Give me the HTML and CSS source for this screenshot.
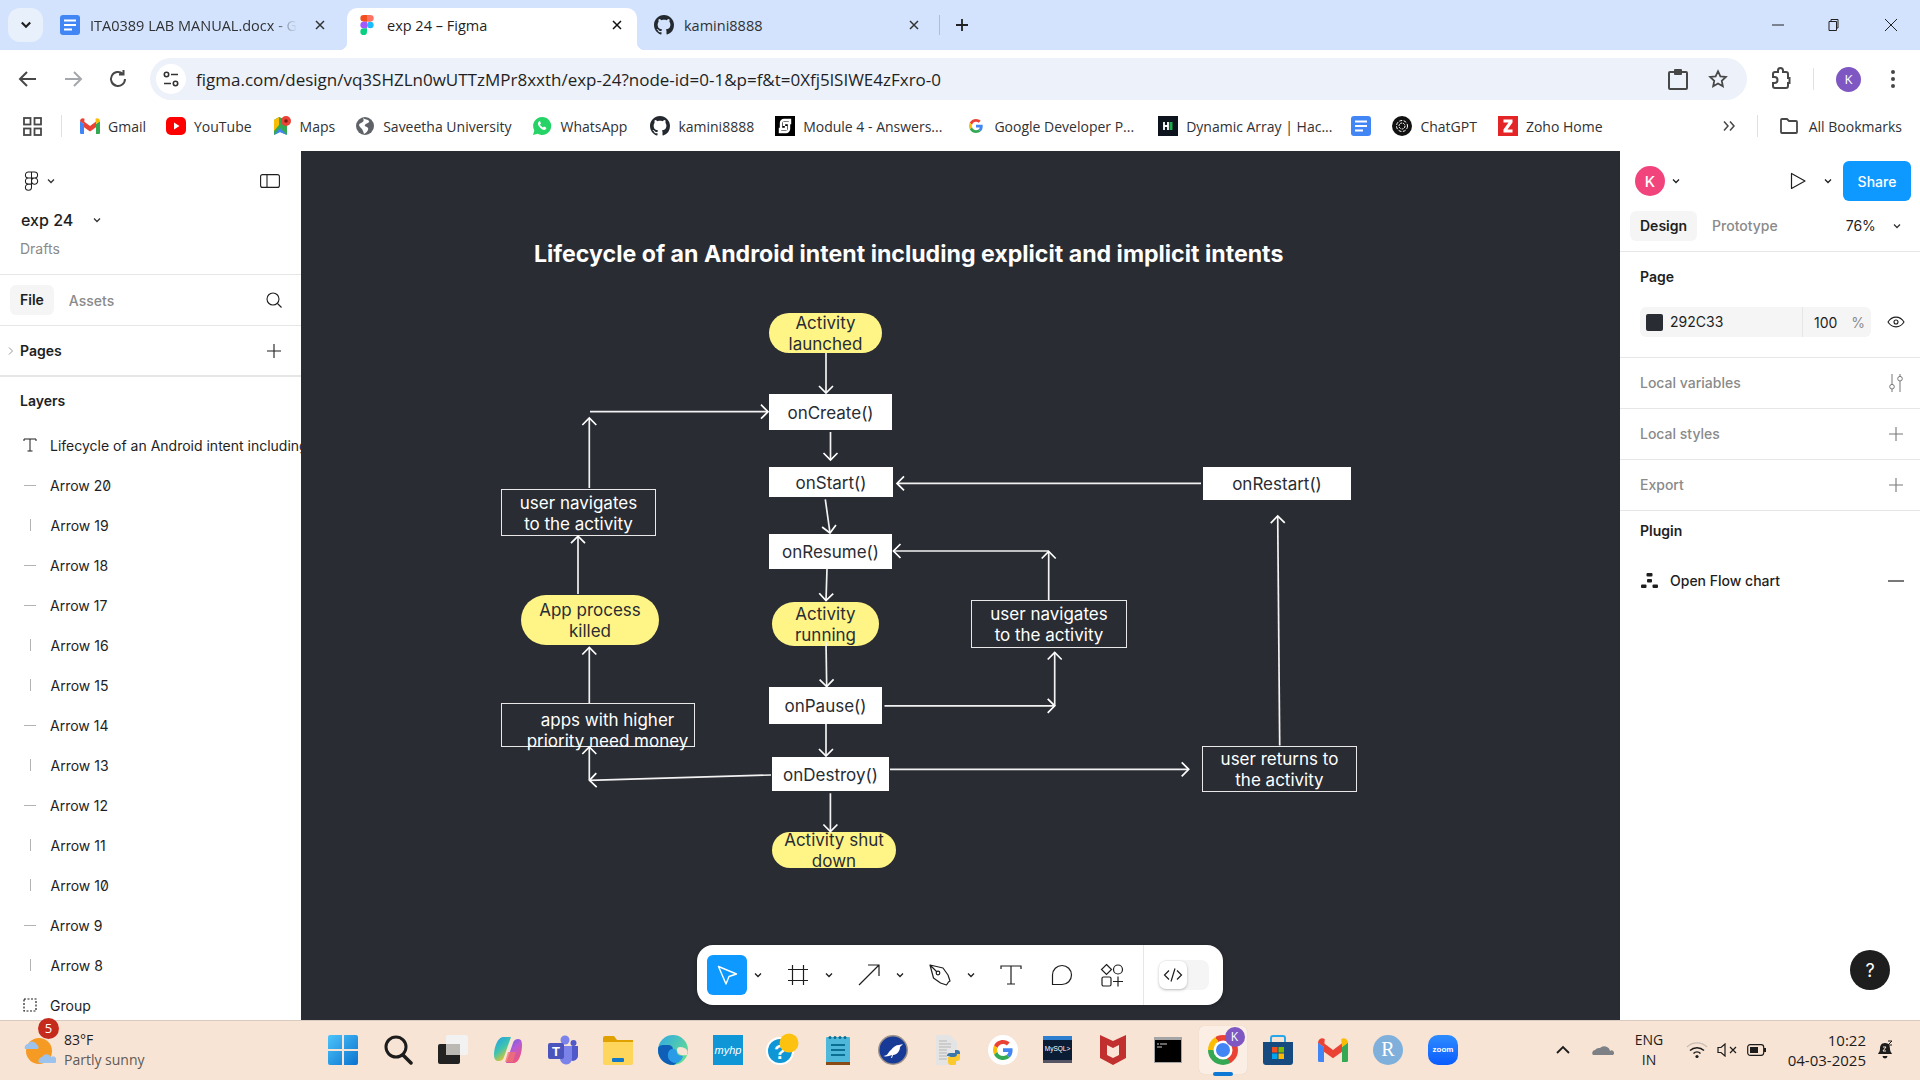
FILE: index.html
```html
<!DOCTYPE html>
<html lang="en">
<head>
<meta charset="utf-8">
<title>exp 24 – Figma</title>
<link rel="stylesheet" href="styles.css">
</head>
<body>
<svg class="sprite" aria-hidden="true">
  <symbol id="github" viewBox="0 0 16 16"><path fill="#24292f" d="M8 0C3.58 0 0 3.58 0 8c0 3.54 2.29 6.53 5.47 7.59.4.07.55-.17.55-.38 0-.19-.01-.82-.01-1.49-2.01.37-2.53-.49-2.69-.94-.09-.23-.48-.94-.82-1.13-.28-.15-.68-.52-.01-.53.63-.01 1.08.58 1.23.82.72 1.21 1.87.87 2.33.66.07-.52.28-.87.51-1.07-1.78-.2-3.64-.89-3.64-3.95 0-.87.31-1.59.82-2.15-.08-.2-.36-1.02.08-2.12 0 0 .67-.21 2.2.82.64-.18 1.32-.27 2-.27.68 0 1.36.09 2 .27 1.53-1.04 2.2-.82 2.2-.82.44 1.1.16 1.92.08 2.12.51.56.82 1.27.82 2.15 0 3.07-1.87 3.75-3.65 3.95.29.25.54.73.54 1.48 0 1.07-.01 1.93-.01 2.2 0 .21.15.46.55.38A8.013 8.013 0 0016 8c0-4.42-3.58-8-8-8z"/></symbol>
  <symbol id="docs" viewBox="0 0 20 20"><rect x="0" y="0" width="20" height="20" rx="3" fill="#4285f4"/><path d="M4 5.500h12M4 10h12M4 14.500h8" stroke="#fff" stroke-width="2.200"/></symbol>
  <symbol id="google" viewBox="0 0 48 48"><path fill="#EA4335" d="M24 9.500c3.540 0 6.710 1.220 9.210 3.600l6.850-6.850C35.900 2.380 30.470 0 24 0 14.620 0 6.510 5.380 2.560 13.220l7.980 6.190C12.430 13.720 17.740 9.500 24 9.500z"/><path fill="#4285F4" d="M46.980 24.550c0-1.570-.15-3.090-.38-4.550H24v9.020h12.940c-.58 2.960-2.260 5.480-4.780 7.180l7.730 6c4.510-4.180 7.090-10.360 7.090-17.65z"/><path fill="#FBBC05" d="M10.530 28.590c-.48-1.450-.76-2.990-.76-4.590s.27-3.140.76-4.590l-7.980-6.190C.92 16.460 0 20.120 0 24c0 3.880.92 7.540 2.560 10.780l7.970-6.190z"/><path fill="#34A853" d="M24 48c6.480 0 11.930-2.130 15.890-5.810l-7.730-6c-2.150 1.450-4.920 2.300-8.160 2.300-6.260 0-11.570-4.220-13.470-9.910l-7.980 6.190C6.510 42.620 14.620 48 24 48z"/></symbol>
  <symbol id="gmail" viewBox="0 0 20 16"><path fill="#4285f4" d="M0 3v12a1 1 0 0 0 1 1h3V6z"/><path fill="#34a853" d="M16 6v10h3a1 1 0 0 0 1-1V3z"/><path fill="#ea4335" d="M4 9.200V3.500L10 8l6-4.500V9.200L10 13.500z"/><path fill="#ea4335" d="M0 3.200C0 .8 2.700-.6 4.500.8L4 6z"/><path fill="#fbbc04" d="M20 3.200c0-2.400-2.700-3.800-4.500-2.400L16 6z"/></symbol>
  <symbol id="plus" viewBox="0 0 16 16"><path d="M8 1v14M1 8h14" fill="none" stroke="currentColor" stroke-width="1.100"/></symbol>
  <symbol id="chev" viewBox="0 0 10 10"><path d="M2 3.500 5 6.500 8 3.500" fill="none" stroke="currentColor" stroke-width="1.300"/></symbol>
  <symbol id="figline" viewBox="0 0 15 21"><path fill="none" stroke="#1e1e1e" stroke-width="1.100" d="M7.500 1H4.300a3.200 3.200 0 0 0 0 6.400h3.200zM7.500 1h3.200a3.200 3.200 0 0 1 0 6.400H7.500zM7.500 7.400H4.300a3.200 3.200 0 0 0 0 6.400h3.200zM14 10.600a3.200 3.200 0 1 1-6.500 0 3.200 3.200 0 0 1 6.500 0zM7.500 13.800H4.300a3.200 3.200 0 1 0 3.200 3.200z"/></symbol>
</svg>

<div class="tabstrip">
  <div class="tab-search"><svg class="ic12" viewBox="0 0 10 10"><path d="M1.500 3 5 6.500 8.500 3" fill="none" stroke="#1f1f1f" stroke-width="1.800"/></svg></div>
  <div class="tab">
    <span class="tab-icon"><svg class="ic-doc"><use href="#docs"/></svg></span>
    <span class="tab-title tab-fade">ITA0389 LAB MANUAL.docx - G</span>
    <svg class="tab-x" viewBox="0 0 10 10"><path d="M1 1l8 8M9 1l-8 8" stroke="#333" stroke-width="1.500"/></svg>
  </div>
  <div class="tab tab-active">
    <span class="tab-icon"><svg class="ic-fig" viewBox="0 0 38 57"><path fill="#1ABCFE" d="M19 28.500a9.500 9.500 0 1 1 19 0 9.500 9.500 0 0 1-19 0z"/><path fill="#0ACF83" d="M0 47.500A9.500 9.500 0 0 1 9.500 38H19v9.500a9.500 9.500 0 1 1-19 0z"/><path fill="#FF7262" d="M19 0v19h9.500a9.500 9.500 0 1 0 0-19H19z"/><path fill="#F24E1E" d="M0 9.500A9.500 9.500 0 0 0 9.500 19H19V0H9.500A9.500 9.500 0 0 0 0 9.500z"/><path fill="#A259FF" d="M0 28.500A9.500 9.500 0 0 0 9.500 38H19V19H9.500A9.500 9.500 0 0 0 0 28.500z"/></svg></span>
    <span class="tab-title">exp 24 – Figma</span>
    <svg class="tab-x" viewBox="0 0 10 10"><path d="M1 1l8 8M9 1l-8 8" stroke="#111" stroke-width="1.500"/></svg>
  </div>
  <div class="tab">
    <span class="tab-icon"><svg class="ic20"><use href="#github"/></svg></span>
    <span class="tab-title">kamini8888</span>
    <svg class="tab-x" viewBox="0 0 10 10"><path d="M1 1l8 8M9 1l-8 8" stroke="#333" stroke-width="1.500"/></svg>
  </div>
  <span class="tab-divider"></span>
  <svg class="tab-plus" viewBox="0 0 14 14"><path d="M7 1v12M1 7h12" stroke="#222" stroke-width="1.800"/></svg>
  <div class="win-controls">
    <svg class="win-ic" viewBox="0 0 14 14"><path d="M1 7h12" stroke="#222" stroke-width="1"/></svg>
    <svg class="win-ic win-restore" viewBox="0 0 14 14"><path d="M3 3.500h7.500v9H3zM5 3.500V1.500h7v8.500h-1.500" fill="none" stroke="#222" stroke-width="1"/></svg>
    <svg class="win-ic win-close" viewBox="0 0 14 14"><path d="M1 1l12 12M13 1L1 13" stroke="#222" stroke-width="1"/></svg>
  </div>
</div>

<div class="toolbar">
  <svg class="nav-ic" viewBox="0 0 24 24"><path d="M20 12H5M11 5l-7 7 7 7" fill="none" stroke="#474747" stroke-width="2"/></svg>
  <svg class="nav-ic" viewBox="0 0 24 24"><path d="M4 12h15M13 5l7 7-7 7" fill="none" stroke="#a4a7ab" stroke-width="2"/></svg>
  <svg class="nav-ic" viewBox="0 0 24 24"><path d="M19 12a7 7 0 1 1-2.200-5.100M17.500 3v4.500H13" fill="none" stroke="#474747" stroke-width="2"/></svg>
  <div class="omnibox">
    <span class="tune"><svg class="ic18" viewBox="0 0 18 18"><g fill="none" stroke="#333" stroke-width="1.600"><circle cx="4.500" cy="4.500" r="2.200"/><path d="M9 4.500h7M2 13.500h7"/><circle cx="13.500" cy="13.500" r="2.200"/></g></svg></span>
    <span class="url">figma.com/design/vq3SHZLn0wUTTzMPr8xxth/exp-24?node-id=0-1&amp;p=f&amp;t=0Xfj5lSIWE4zFxro-0</span>
    <svg class="omni-ic" viewBox="0 0 22 24"><path d="M3 5h16a1 1 0 0 1 1 1v15a1 1 0 0 1-1 1H3a1 1 0 0 1-1-1V6a1 1 0 0 1 1-1z" fill="none" stroke="#474747" stroke-width="2"/><rect x="7" y="2" width="8" height="6" rx="1" fill="#474747"/></svg>
    <svg class="omni-ic" viewBox="0 0 24 24"><path d="M12 3.500l2.600 5.600 6 .7-4.500 4.100 1.200 6-5.300-3-5.300 3 1.200-6L3.400 9.800l6-.7z" fill="none" stroke="#474747" stroke-width="1.900"/></svg>
  </div>
  <svg class="ext-ic" viewBox="0 0 24 24"><path d="M19 11V7a2 2 0 0 0-2-2h-3V3.500a2.500 2.500 0 0 0-5 0V5H6a2 2 0 0 0-2 2v3h1.500a3 3 0 0 1 0 6H4v3a2 2 0 0 0 2 2h11a2 2 0 0 0 2-2v-3h1.500v-5z" fill="none" stroke="#474747" stroke-width="2"/></svg>
  <span class="tool-divider"></span>
  <span class="profile">K</span>
  <svg class="dots" viewBox="0 0 4 20"><circle cx="2" cy="3" r="2" fill="#474747"/><circle cx="2" cy="10" r="2" fill="#474747"/><circle cx="2" cy="17" r="2" fill="#474747"/></svg>
</div>

<div class="bookmarks">
  <svg class="bm-apps" viewBox="0 0 19 19"><g fill="none" stroke="#474747" stroke-width="1.800"><rect x="1" y="1" width="6.500" height="6.500"/><rect x="11.500" y="1" width="6.500" height="6.500"/><rect x="1" y="11.500" width="6.500" height="6.500"/><rect x="11.500" y="11.500" width="6.500" height="6.500"/></g></svg>
  <span class="bm-sep"></span>
  <span class="bm bm-t"><svg class="bm-ic-g"><use href="#gmail"/></svg>Gmail</span>
  <span class="bm bm-t"><svg class="ic20" viewBox="0 0 20 20"><rect y="1" width="20" height="18" rx="5" fill="#f00"/><path d="M8 6.500l5.500 3.500L8 13.500z" fill="#fff"/></svg>YouTube</span>
  <span class="bm bm-t"><svg class="ic20" viewBox="0 0 20 20"><path d="M2 4l5-3 8 3v15L8 16l-6 3z" fill="#34a853"/><path d="M2 19l6-7 7 7-7-3z" fill="#4285f4"/><path d="M2 4l5-3v8l-5 6z" fill="#fbbc04"/><circle cx="14" cy="5" r="5" fill="#ea4335"/><circle cx="14" cy="5" r="1.800" fill="#7d1a12"/></svg>Maps</span>
  <span class="bm"><svg class="ic20" viewBox="0 0 20 20"><circle cx="10" cy="10" r="9" fill="#5f6368"/><path d="M8 2c2 2 5 1 6 3s-3 2-4 4 2 1 3 3-2 5-4 6c-1-3-1-4-3-6s-3-4 0-5 3-3 2-5z" fill="#fff"/></svg>Saveetha University</span>
  <span class="bm bm-wa"><svg class="ic20" viewBox="0 0 20 20"><path d="M10 1a9 9 0 0 0-7.700 13.500L1 19l4.700-1.200A9 9 0 1 0 10 1z" fill="#25d366"/><path d="M7 5.500c-1.500 1-1.500 3 .5 5.500s4.500 3.500 6 2.500c1-.7 1-1.500.5-2l-2-1-1 1c-1-.3-2.500-1.800-3-3l1-1-1-2.200c-.3-.4-.7-.4-1-.3z" fill="#fff"/></svg>WhatsApp</span>
  <span class="bm"><svg class="ic20"><use href="#github"/></svg>kamini8888</span>
  <span class="bm bm-mod"><svg class="ic20" viewBox="0 0 20 20"><rect width="20" height="20" fill="#000"/><path d="M6 12V7a3 3 0 0 1 3-3h6v3H9v3M14 8v5a3 3 0 0 1-3 3H5v-3h6v-3" fill="none" stroke="#fff" stroke-width="2.400"/></svg>Module 4 - Answers...</span>
  <span class="bm bm-goog"><svg class="ic14"><use href="#google"/></svg>Google Developer P...</span>
  <span class="bm bm-dyn"><svg class="ic20" viewBox="0 0 20 20"><rect width="20" height="20" fill="#0e141e"/><path d="M6 6v8M10 6v8M6 10h4" stroke="#fff" stroke-width="1.800"/><rect x="11.500" y="6" width="3" height="8" fill="#1ba94c"/></svg>Dynamic Array | Hac...</span>
  <span class="bm bm-iconly"><svg class="ic20"><use href="#docs"/></svg></span>
  <span class="bm"><svg class="ic20" viewBox="0 0 20 20"><circle cx="10" cy="10" r="10" fill="#111"/><g fill="none" stroke="#fff" stroke-width="1"><circle cx="10" cy="10" r="5.500" stroke-dasharray="3 1.500"/><circle cx="10" cy="10" r="3" stroke-dasharray="2 1"/></g></svg>ChatGPT</span>
  <span class="bm"><svg class="ic20" viewBox="0 0 20 20"><rect width="20" height="20" fill="#e42527"/><path d="M5.500 3.500h9v3l-5 7h5v3h-9v-3l5-7h-5z" fill="#fff"/></svg>Zoho Home</span>
  <svg class="bm-more" viewBox="0 0 14 12"><path d="M2 1.500 6 6 2 10.500M8 1.500 12 6 8 10.500" fill="none" stroke="#474747" stroke-width="1.500"/></svg>
  <span class="bm-sep bm-sep2"></span>
  <span class="bm bm-all"><svg class="ic20" viewBox="0 0 20 20"><path d="M2 4a1 1 0 0 1 1-1h5l2 2h7a1 1 0 0 1 1 1v10a1 1 0 0 1-1 1H3a1 1 0 0 1-1-1z" fill="none" stroke="#474747" stroke-width="1.800"/></svg>All Bookmarks</span>
</div>

<main class="figma">
  <aside class="left">
    <div class="l-head">
      <div class="l-logo-row">
        <svg class="fig-outline"><use href="#figline"/></svg>
        <svg class="chev"><use href="#chev"/></svg>
        <svg class="panel-toggle" viewBox="0 0 20 14"><rect x=".6" y=".6" width="18.800" height="12.800" rx="2" fill="none" stroke="#1e1e1e" stroke-width="1.100"/><path d="M7 .6v12.800" stroke="#1e1e1e" stroke-width="1.100"/></svg>
      </div>
      <div class="l-name"><span>exp 24</span><svg class="chev"><use href="#chev"/></svg></div>
      <div class="l-drafts">Drafts</div>
    </div>
    <div class="l-tabs">
      <span class="pill">File</span><span class="muted-tab">Assets</span>
      <svg class="l-search" viewBox="0 0 16 16"><circle cx="7" cy="7" r="6" fill="none" stroke="#1e1e1e" stroke-width="1.100"/><path d="M11.500 11.500l4 4" stroke="#1e1e1e" stroke-width="1.100"/></svg>
    </div>
    <div class="l-pages">
      <svg class="pg-chev" viewBox="0 0 6 10"><path d="M1 1.500 4.500 5 1 8.500" fill="none" stroke="#999" stroke-width="1"/></svg>
      <span class="strong">Pages</span>
      <svg class="l-plus"><use href="#plus"/></svg>
    </div>
    <div class="l-layers-title strong">Layers</div>
    <ul class="layers">
      <li><svg class="ly-ic" viewBox="0 0 14 14"><path d="M1 3V1h12v2M7 1v12M4.500 13h5" fill="none" stroke="#1e1e1e" stroke-width="1"/></svg><span>Lifecycle of an Android intent including</span></li>
      <li><span class="dash-h"></span><span>Arrow 20</span></li>
      <li><span class="dash-v"></span><span>Arrow 19</span></li>
      <li><span class="dash-h"></span><span>Arrow 18</span></li>
      <li><span class="dash-h"></span><span>Arrow 17</span></li>
      <li><span class="dash-v"></span><span>Arrow 16</span></li>
      <li><span class="dash-v"></span><span>Arrow 15</span></li>
      <li><span class="dash-h"></span><span>Arrow 14</span></li>
      <li><span class="dash-v"></span><span>Arrow 13</span></li>
      <li><span class="dash-h"></span><span>Arrow 12</span></li>
      <li><span class="dash-v"></span><span>Arrow 11</span></li>
      <li><span class="dash-v"></span><span>Arrow 10</span></li>
      <li><span class="dash-h"></span><span>Arrow 9</span></li>
      <li><span class="dash-v"></span><span>Arrow 8</span></li>
      <li><svg class="ly-ic" viewBox="0 0 14 14"><rect x="1" y="1" width="12" height="12" fill="none" stroke="#1e1e1e" stroke-width="1.200" stroke-dasharray="2 1.500"/></svg><span>Group</span></li>
    </ul>
  </aside>

  <section class="canvas">
    <h1 class="d-title">Lifecycle of an Android intent including explicit and implicit intents</h1>
    <div class="node pill-y n-launched">Activity<br>launched</div>
    <div class="node box n-create">onCreate()</div>
    <div class="node box n-start">onStart()</div>
    <div class="node box n-resume">onResume()</div>
    <div class="node ghost n-navl">user navigates<br>to the activity</div>
    <div class="node pill-y n-killed">App process<br>killed</div>
    <div class="node pill-y n-running">Activity<br>running</div>
    <div class="node box n-pause">onPause()</div>
    <div class="node ghost n-higher">apps with higher<br>priority need money</div>
    <div class="node box n-destroy">onDestroy()</div>
    <div class="node pill-y n-shut">Activity shut<br>down</div>
    <div class="node box n-restart">onRestart()</div>
    <div class="node ghost n-navr">user navigates<br>to the activity</div>
    <div class="node ghost n-returns">user returns to<br>the activity</div>

    <svg class="wires" viewBox="301 151 1319 869">
      <defs><marker id="head" markerUnits="userSpaceOnUse" markerWidth="20" markerHeight="20" refX="10" refY="10" orient="auto" viewBox="0 0 20 20"><path d="M3 3l7 7-7 7" fill="none" stroke="#fff" stroke-width="1.700"/></marker></defs>
      <g class="wire">
        <path d="M826 353V393"/>
        <path d="M590 411.700H768"/>
        <path d="M589.300 488V418"/>
        <path d="M830.500 432V460"/>
        <path d="M1201 483.400H897"/>
        <path d="M825.300 499.300L830 533"/>
        <path d="M1048.700 551H893.500"/>
        <path d="M1048.700 600V551.500"/>
        <path d="M827 568.500L826 600.500"/>
        <path d="M826 642L826.700 686.500"/>
        <path d="M884.500 705.800H1054.700"/>
        <path d="M1054.700 706V652.500"/>
        <path d="M826 724V756"/>
        <path d="M771 775L589.500 780.300"/>
        <path d="M589.300 780V747"/>
        <path d="M890 769.300H1188.700"/>
        <path d="M1279.700 745.500L1277.700 516"/>
        <path d="M830.400 793.300V831.500"/>
        <path d="M589.300 703V647.500"/>
        <path d="M578 594V536.200"/>
      </g>
    </svg>

    <div class="floatbar">
      <span class="tool tool-on"><svg class="ic24" viewBox="0 0 24 24"><path d="M3.500 3.500l18 7.500-7.500 2.500-3 7.500z" fill="none" stroke="#fff" stroke-width="1.400" stroke-linejoin="round"/></svg></span>
      <svg class="tool-chev"><use href="#chev"/></svg>
      <span class="gap"></span>
      <span class="tool"><svg class="ic24" viewBox="0 0 24 24"><path d="M6.500 2v20M17.500 2v20M2 6.500h20M2 17.500h20" fill="none" stroke="#1e1e1e" stroke-width="1.200"/></svg></span>
      <svg class="tool-chev"><use href="#chev"/></svg>
      <span class="gap"></span>
      <span class="tool"><svg class="ic24" viewBox="0 0 24 24"><path d="M2 22L22 2M11 2h11v11" fill="none" stroke="#1e1e1e" stroke-width="1.200"/></svg></span>
      <svg class="tool-chev"><use href="#chev"/></svg>
      <span class="gap"></span>
      <span class="tool"><svg class="ic24" viewBox="0 0 24 24"><path d="M2 2l13 3 5 7 2 6-1.500 1-2 3-6-2-7-5zM2 2l7 7" fill="none" stroke="#1e1e1e" stroke-width="1.200" stroke-linejoin="round"/><circle cx="10" cy="10" r="1.800" fill="none" stroke="#1e1e1e" stroke-width="1.200"/></svg></span>
      <svg class="tool-chev"><use href="#chev"/></svg>
      <span class="gap"></span>
      <span class="tool"><svg class="ic24" viewBox="0 0 24 24"><path d="M2 6V3h20v3M12 3v18M8 21h8" fill="none" stroke="#1e1e1e" stroke-width="1.200"/></svg></span>
      <span class="gap"></span>
      <span class="tool"><svg class="ic24" viewBox="0 0 24 24"><path d="M2.500 21.500V12a9.500 9.500 0 1 1 9.500 9.500z" fill="none" stroke="#1e1e1e" stroke-width="1.200"/></svg></span>
      <span class="gap"></span>
      <span class="tool"><svg class="ic24" viewBox="0 0 24 24"><g fill="none" stroke="#1e1e1e" stroke-width="1.200"><path d="M6.500 1.500l5 5-5 5-5-5z"/><circle cx="18" cy="6.500" r="4.500"/><rect x="2" y="14" width="9" height="9" rx="1.500"/><path d="M18 13.500v10M13 18.500h10"/></g></svg></span>
      <span class="bar-div"></span>
      <span class="toggle"><span class="knob"><svg class="ic20" viewBox="0 0 20 20"><path d="M6 5.500L1.500 10 6 14.500M14 5.500l4.500 4.500-4.500 4.500M12 3.500l-4 13" fill="none" stroke="#1e1e1e" stroke-width="1.200"/></svg></span></span>
    </div>
  </section>

  <aside class="right">
    <div class="r-top">
      <span class="avatar">K</span>
      <svg class="chev chev-dark"><use href="#chev"/></svg>
      <svg class="play" viewBox="0 0 16 18"><path d="M1.500 1.500v15L15 9z" fill="none" stroke="#1e1e1e" stroke-width="1.200" stroke-linejoin="round"/></svg>
      <svg class="chev chev-play"><use href="#chev"/></svg>
      <span class="share">Share</span>
    </div>
    <div class="r-tabs">
      <span class="pill">Design</span><span class="muted-tab">Prototype</span>
      <span class="zoomval">76%</span>
      <svg class="chev"><use href="#chev"/></svg>
    </div>
    <div class="r-page">
      <div class="r-page-title strong">Page</div>
      <div class="r-fill">
        <div class="fill-input"><span class="swatch"></span><span class="hex">292C33</span><span class="pct">100</span><span class="pct-s">%</span></div>
        <svg class="eye" viewBox="0 0 18 12"><path d="M1 6c4-6.500 12-6.500 16 0-4 6.500-12 6.500-16 0z" fill="none" stroke="#1e1e1e" stroke-width="1.100"/><circle cx="9" cy="6" r="2" fill="none" stroke="#1e1e1e" stroke-width="1.100"/></svg>
      </div>
    </div>
    <div class="r-row"><span>Local variables</span><svg class="r-ic" viewBox="0 0 16 18"><g fill="none" stroke="#777" stroke-width="1"><path d="M4 0v10.500M4 15v3"/><circle cx="4" cy="12.700" r="2.300"/><path d="M12 0v2.500M12 7v11"/><circle cx="12" cy="4.700" r="2.300"/></g></svg></div>
    <div class="r-row"><span>Local styles</span><svg class="r-ic plus-g"><use href="#plus"/></svg></div>
    <div class="r-row"><span>Export</span><svg class="r-ic plus-g"><use href="#plus"/></svg></div>
    <div class="r-plugin strong">Plugin</div>
    <div class="r-flow">
      <svg class="flow-ic" viewBox="0 0 17 15"><g fill="#1e1e1e"><rect x="5.500" y="0" width="6" height="3.500" rx="1"/><rect x="0" y="11.500" width="5.500" height="3.500" rx="1"/><rect x="11.500" y="11.500" width="5.500" height="3.500" rx="1"/><rect x="6" y="6" width="5" height="3.500" rx="1"/></g></svg>
      <span>Open Flow chart</span>
      <svg class="flow-minus" viewBox="0 0 16 2"><path d="M0 1h16" stroke="#1e1e1e" stroke-width="1.200"/></svg>
    </div>
    <div class="help">?</div>
  </aside>
</main>

<footer class="taskbar">
  <div class="weather">
    <svg class="w-ic" viewBox="0 0 32 30"><circle cx="15" cy="16" r="13" fill="#f59a23"/><path d="M1 14a3.500 3.500 0 0 1 3-5 5 5 0 0 1 9 1 3 3 0 0 1 1 4z" fill="#9cc3ee"/><path d="M15 28a4 4 0 0 1 3-6 5 5 0 0 1 9 0 3 3 0 0 1 4 6z" fill="#9cc3ee"/></svg>
    <span class="w-badge">5</span>
    <div class="w-text"><span>83°F</span><span class="w-sub">Partly sunny</span></div>
  </div>
  <div class="apps">
    <span class="app"><svg class="ic30" viewBox="0 0 30 30"><defs><linearGradient id="win" x1="0" y1="0" x2="1" y2="1"><stop offset="0" stop-color="#4cc4fa"/><stop offset="1" stop-color="#0a72cf"/></linearGradient></defs><path fill="url(#win)" d="M0 2a2 2 0 0 1 2-2h12v14H0zM16 0h12a2 2 0 0 1 2 2v12H16zM0 16h14v14H2a2 2 0 0 1-2-2zM16 16h14v12a2 2 0 0 1-2 2H16z"/></svg></span>
    <span class="app"><svg class="ic30" viewBox="0 0 30 30"><circle cx="13" cy="12" r="10" fill="none" stroke="#1c1c1c" stroke-width="3"/><path d="M20 20l8 8" stroke="#1c1c1c" stroke-width="3.500" stroke-linecap="round"/></svg></span>
    <span class="app"><svg class="ic30" viewBox="0 0 30 30"><rect x="0" y="9" width="22" height="20" rx="2" fill="#222"/><rect x="8" y="0" width="22" height="20" rx="2" fill="#f2f2f2"/><rect x="8" y="9" width="14" height="11" fill="#bcb8b4"/></svg></span>
    <span class="app"><svg class="ic30" viewBox="0 0 30 30"><defs><linearGradient id="cpa" x1="0" y1="0" x2=".6" y2="1"><stop offset="0" stop-color="#1f9de8"/><stop offset=".55" stop-color="#3fc4b0"/><stop offset="1" stop-color="#f5c518"/></linearGradient><linearGradient id="cpb" x1="0" y1="0" x2=".6" y2="1"><stop offset="0" stop-color="#4a63e0"/><stop offset=".5" stop-color="#b45cd8"/><stop offset="1" stop-color="#f0527a"/></linearGradient></defs><path fill="url(#cpa)" d="M10 2h8l-7 20c-.8 2.500-2.500 4-5.500 4C2.500 26 1 24 1 20 1 12 5 2 10 2z"/><path fill="url(#cpb)" d="M21 28h-8l7-20c.8-2.500 2.500-4 5.500-4C28 4 29 6 29 10c0 8-3 18-8 18z"/><path fill="#f4736a" d="M12 27h8l3-10h-8z" opacity=".75"/></svg></span>
    <span class="app"><svg class="ic30" viewBox="0 0 30 30"><circle cx="17" cy="5" r="4.500" fill="#7b83eb"/><circle cx="25.500" cy="8" r="3" fill="#5059c9"/><path d="M20 11h10v10a5 5 0 0 1-7 4.500z" fill="#5059c9"/><path d="M10 11h14v12a6 6 0 0 1-12 1z" fill="#7b83eb"/><rect x="0" y="8" width="16" height="16" rx="2" fill="#4b53bc"/><text class="teams-t" x="8" y="21">T</text></svg></span>
    <span class="app"><svg class="ic30" viewBox="0 0 30 30"><path d="M0 3a2 2 0 0 1 2-2h9l3 4h16v4H0z" fill="#e0a100"/><path d="M0 7h30v21a2 2 0 0 1-2 2H2a2 2 0 0 1-2-2z" fill="#ffd65c"/><rect x="9" y="23" width="12" height="4" rx="1" fill="#1478c8"/></svg></span>
    <span class="app"><svg class="ic30" viewBox="0 0 30 30"><defs><linearGradient id="edge" x1="0" y1="0" x2="1" y2=".8"><stop offset="0" stop-color="#2fa8e8"/><stop offset="1" stop-color="#67e08a"/></linearGradient></defs><circle cx="15" cy="15" r="15" fill="url(#edge)"/><path d="M15 30C6 30 0 23 0 15 0 9 5 10 9 10c5 0 6 2 6 5 0 3 3 6 6 6-1 5-3 9-6 9z" fill="#0f5fb8"/><path d="M18 28c-7 0-10-7-7-12 3-4 8-2 8 2 0 2 3 3 6 3-1 4-4 7-7 7z" fill="#2a9be6"/><path d="M19 15a3 3 0 0 1 3-3c3 0 6 1 7.500 4l-.5 4c-4 1-10 0-10-5z" fill="#f8e4d5"/></svg></span>
    <span class="app"><svg class="ic30" viewBox="0 0 30 30"><rect width="30" height="30" fill="#0e96d6"/><text class="hp-t" x="15" y="19">myhp</text></svg></span>
    <span class="app"><svg class="ic30 over" viewBox="0 0 30 30"><circle cx="12" cy="16" r="14" fill="#fff"/><circle cx="12" cy="16" r="12" fill="#0e96d6"/><text class="q-t" x="12" y="24">?</text><circle cx="21" cy="8" r="9.500" fill="#fdc20f"/></svg></span>
    <span class="app"><svg class="ic30" viewBox="0 0 30 30"><rect x="3" y="2" width="24" height="26" rx="1" fill="#4fb8da"/><rect x="3" y="27" width="24" height="3" fill="#8a4b14"/><g fill="#0b6f94"><circle cx="7" cy="2.500" r="1.500"/><circle cx="12" cy="2.500" r="1.500"/><circle cx="17" cy="2.500" r="1.500"/><circle cx="22" cy="2.500" r="1.500"/><rect x="8" y="9" width="14" height="2"/><rect x="8" y="14" width="14" height="2"/><rect x="8" y="19" width="14" height="2"/></g></svg></span>
    <span class="app"><svg class="ic30" viewBox="0 0 30 30"><circle cx="15" cy="15" r="15" fill="#9a9088"/><circle cx="15" cy="15" r="13.500" fill="#173a97"/><path d="M5 21c5 0 5-4 8-6 2-3 5-5 8-5l4-1-3 3c0 4-3 8-7 8l-1 3h-1l1-3c-3 1-6 2-9 1z" fill="#fff"/></svg></span>
    <span class="app"><svg class="ic30" viewBox="0 0 30 30"><path d="M3 0h14l7 7v23H3z" fill="#e4e4e4"/><path d="M6 6h8M6 9h12M6 12h12M6 15h8M6 18h8M6 21h8M6 24h8" stroke="#b5b5b5" stroke-width="1"/><path d="M14 21a3 3 0 0 1 3-3h5v-3h2a3 3 0 0 1 3 3v3a3 3 0 0 1-3 3h-5a5 5 0 0 0-5-3z" fill="#3a76a8"/><path d="M15 22h6a3 3 0 0 0 3-3h3v4a3 3 0 0 1-3 3h-1v3a2 2 0 0 1-2 1h-3a3 3 0 0 1-3-3z" fill="#fbc92d"/></svg></span>
    <span class="app"><svg class="ic30" viewBox="0 0 30 30"><circle cx="15" cy="15" r="15" fill="#fff"/><svg x="5" y="5" width="20" height="20"><use href="#google"/></svg></svg></span>
    <span class="app"><svg class="ic30" viewBox="0 0 30 30"><rect x="0" y="1" width="29" height="27" fill="#0b1c35"/><rect x="0" y="1" width="29" height="4" fill="#2f7fd1"/><text class="my-t" x="14.500" y="16">MySQL&gt;</text><rect x="0" y="25" width="29" height="3" fill="#556"/></svg></span>
    <span class="app"><svg class="ic30" viewBox="0 0 30 30"><path d="M2 0l13 6L28 0v23l-13 7-13-7z" fill="#c1302e"/><path d="M9 10l6 3 6-3v10l-6 3-6-3z" fill="#fbe4d5"/></svg></span>
    <span class="app"><svg class="ic30" viewBox="0 0 30 30"><rect x="1" y="2" width="28" height="26" fill="#a5a5a5"/><rect x="2" y="5" width="26" height="22" fill="#000"/><path d="M4 9h2M7 9h7M4 12h5" stroke="#ccc" stroke-width="1.200"/></svg></span>
    <span class="app app-active">
      <span class="chrome"><span class="chrome-in"></span></span>
      <span class="chrome-k">K</span>
      <span class="active-bar"></span>
    </span>
    <span class="app"><svg class="ic30" viewBox="0 0 30 30"><path d="M8 8V3a2 2 0 0 1 2-2h10a2 2 0 0 1 2 2v5" fill="none" stroke="#28a8ea" stroke-width="2"/><path d="M0 7h30v20a3 3 0 0 1-3 3H3a3 3 0 0 1-3-3z" fill="#174b80"/><rect x="9" y="12" width="5.500" height="5.500" fill="#f25022"/><rect x="15.500" y="12" width="5.500" height="5.500" fill="#7fba00"/><rect x="9" y="18.500" width="5.500" height="5.500" fill="#00a4ef"/><rect x="15.500" y="18.500" width="5.500" height="5.500" fill="#ffb900"/></svg></span>
    <span class="app"><svg class="ic30"><use href="#gmail"/></svg></span>
    <span class="app"><span class="r-app">R</span></span>
    <span class="app"><span class="zoom-app">zoom</span></span>
  </div>
  <div class="tray">
    <svg class="tray-caret" viewBox="0 0 16 10"><path d="M2 8l6-6 6 6" fill="none" stroke="#1c1c1c" stroke-width="1.800"/></svg>
    <svg class="tray-cloud" viewBox="0 0 22 12"><path d="M1 11a3 3 0 0 1 2-5 5 5 0 0 1 5-2 6 6 0 0 1 10 3 2 2 0 0 1 3 4z" fill="#7d8085"/></svg>
    <div class="lang"><span>ENG</span><span>IN</span></div>
    <svg class="tray-wifi" viewBox="0 0 22 18"><path d="M1 6a14 14 0 0 1 20 0" fill="none" stroke="#c9bdb3" stroke-width="1.300"/><path d="M4 9.500a10 10 0 0 1 14 0M7.500 12.500a5 5 0 0 1 7 0" fill="none" stroke="#1c1c1c" stroke-width="1.500"/><circle cx="11" cy="15.500" r="1.600" fill="#1c1c1c"/></svg>
    <svg class="tray-vol" viewBox="0 0 20 14"><path d="M1 4.500h3L8 1v12L4 9.500H1z" fill="none" stroke="#1c1c1c" stroke-width="1.200"/><path d="M13 4l6 6M19 4l-6 6" stroke="#1c1c1c" stroke-width="1.200"/></svg>
    <svg class="tray-bat" viewBox="0 0 20 14"><rect x=".7" y="1.700" width="16" height="10.600" rx="2.500" fill="none" stroke="#1c1c1c" stroke-width="1.200"/><rect x="3" y="4" width="8" height="6" fill="#1c1c1c"/><path d="M18 5v4" stroke="#1c1c1c" stroke-width="2"/></svg>
    <div class="clock"><span>10:22</span><span>04-03-2025</span></div>
    <svg class="tray-bell" viewBox="0 0 18 20"><path d="M9 3c-4 0-5 3-5 6 0 3-2 4-2 5h14c0-1-2-2-2-5 0-3-1-6-5-6z" fill="#1c1c1c"/><path d="M6.500 16a2.500 2.500 0 0 0 5 0z" fill="#1c1c1c"/><path d="M7 7h3l-3 4h3" fill="none" stroke="#f8e4d5" stroke-width="1"/><path d="M12 1h4l-4 4h4" fill="none" stroke="#1c1c1c" stroke-width="1"/></svg>
  </div>
</footer>
</body>
</html>
```

FILE: styles.css
```css
* { box-sizing: border-box; }
html, body { margin: 0; padding: 0; }
body {
  width: 1920px; height: 1080px; overflow: hidden;
  display: flex; flex-direction: column;
  font-family: "Open Sans", "Liberation Sans", sans-serif;
  color: #1f1f1f; background: #fff;
}
svg { display: block; flex: none; }
.sprite { width: 0; height: 0; position: absolute; }
.ic12 { width: 12px; height: 12px; }
.ic14 { width: 14px; height: 14px; margin: 0 3px; }
.ic18 { width: 18px; height: 18px; }
.ic20 { width: 20px; height: 20px; }
.ic24 { width: 24px; height: 24px; }
.ic30 { width: 30px; height: 30px; }

/* tab strip */
.tabstrip {
  height: 50px; flex: none; background: #d3e3fd;
  display: flex; align-items: flex-end; padding-left: 8px;
  font-size: 14.500px; position: relative;
}
.tab-search {
  width: 35px; height: 34px; margin: 0 7px 8px 0; border-radius: 12px;
  background: #e8f0fc; display: flex; align-items: center; justify-content: center;
}
.tab {
  width: 290px; height: 42px; margin-right: 7px; padding: 0 10px 8px 10px;
  display: flex; align-items: center; border-radius: 10px 10px 0 0; color: #303134;
}
.tab-active { background: #fff; color: #1f1f1f; position: relative; }
.tab-active::before, .tab-active::after {
  content: ""; position: absolute; bottom: 0; width: 8px; height: 8px;
}
.tab-active::before { left: -8px; background: radial-gradient(circle at 0 0, transparent 8px, #fff 8.500px); }
.tab-active::after { right: -8px; background: radial-gradient(circle at 100% 0, transparent 8px, #fff 8.500px); }
.tab-icon { width: 20px; display: flex; justify-content: center; margin-right: 10px; flex: none; }
.ic-doc { width: 20px; height: 20px; }
.ic-fig { width: 14px; height: 20px; }
.tab-title { flex: 1; white-space: nowrap; margin-right: 13px; min-width: 0; }
.tab-fade { -webkit-mask-image: linear-gradient(90deg, #000 88%, transparent 100%); mask-image: linear-gradient(90deg, #000 88%, transparent 100%); }
.tab-x { width: 10px; height: 10px; flex: none; margin: 0 5px; }
.tab-divider { width: 1px; height: 20px; background: #a9bfe0; margin: 0 0 15px -2px; }
.tab-plus { width: 14px; height: 14px; margin: 0 0 18px 15px; }
.win-controls { margin: 0 0 18px auto; display: flex; align-items: center; padding-right: 22px; }
.win-ic { width: 14px; height: 14px; }
.win-restore { margin-left: 41.500px; }
.win-close { margin-left: 44px; }

/* address row */
.toolbar {
  height: 51px; flex: none; display: flex; align-items: center; background: #fff;
  border-radius: 9px 9px 0 0; padding: 7px 0 0 16px;
  position: relative;
}
.nav-ic { width: 24px; height: 24px; margin-right: 21px; }
.toolbar .nav-ic:nth-child(3) { margin-right: 20px; }
.omnibox {
  width: 1597px; height: 42px; border-radius: 21px; background: #ecf1fa;
  display: flex; align-items: center; padding-left: 6px; flex: none;
}
.tune {
  width: 30px; height: 30px; border-radius: 50%; background: #fff;
  display: flex; align-items: center; justify-content: center;
}
.url { margin-left: 10px; font-size: 17px; width: 1471px; white-space: nowrap; color: #1f1f1f; flex: none; }
.omni-ic { width: 22px; height: 24px; margin-right: 18px; }
.ext-ic { width: 24px; height: 24px; margin-left: 22px; }
.tool-divider { width: 1px; height: 22px; background: #d3e3fd; margin: 0 22px 0 20px; }
.profile {
  width: 25px; height: 25px; border-radius: 50%; background: #7e57c2; color: #fff;
  font-size: 13px; display: flex; align-items: center; justify-content: center;
}
.dots { width: 4px; height: 20px; margin-left: 30px; }

/* bookmarks */
.bookmarks {
  height: 50px; flex: none; display: flex; align-items: center; background: #fff;
  padding-left: 23px; font-size: 14px; color: #303134;
}
.bm-apps { width: 19px; height: 19px; }
.bm-sep { width: 1px; height: 22px; background: #d3e3fd; margin: 0 18px 0 19px; }
.bm { display: flex; align-items: center; gap: 8px; margin-right: 21px; white-space: nowrap; }
.bm-t { margin-right: 20px; }
.bm-ic-g { width: 20px; height: 16px; }
.bm-wa { margin-right: 23px; }
.bm-mod { margin-right: 24px; }
.bm-goog { margin-right: 24px; }
.bm-dyn { margin-right: 19px; }
.bm-more { width: 14px; height: 12px; margin-left: auto; }
.bm-sep2 { margin: 0 21px 0 21px; }
.bm-all { margin-right: 18px; gap: 10px; }

/* figma */
.figma { flex: 1; display: flex; min-height: 0; font-family: Inter, "Liberation Sans", sans-serif; font-size: 14px; color: #1e1e1e; }
.left { width: 301px; flex: none; background: #fff; display: flex; flex-direction: column; overflow: hidden; }
.left > * { flex: none; }
.l-head { height: 124px; border-bottom: 1px solid #e6e6e6; padding: 20px 21px 0 24px; }
.l-logo-row { display: flex; align-items: center; height: 20px; }
.fig-outline { width: 15px; height: 20px; }
.chev { width: 10px; height: 10px; color: #333; }
.l-logo-row .chev { margin-left: 7px; }
.panel-toggle { width: 20px; height: 14px; margin-left: auto; }
.l-name { display: flex; align-items: center; margin: 19px 0 0 -3px; font-size: 16px; font-weight: 500; height: 20px; }
.l-name .chev { margin-left: 19px; }
.l-drafts { margin: 9px 0 0 -4px; color: #8a8a8a; height: 20px; line-height: 20px; }
.l-tabs { height: 51px; border-bottom: 1px solid #e6e6e6; display: flex; align-items: center; padding-left: 10px; }
.pill { background: #f5f5f5; border-radius: 6px; height: 30px; line-height: 30px; padding: 0 10px; font-weight: 600; }
.muted-tab { color: #8a8a8a; margin-left: 15px; font-weight: 500; }
.l-search { width: 16px; height: 16px; margin-left: auto; margin-right: 19px; }
.l-pages { height: 51px; border-bottom: 2px solid #e6e6e6; display: flex; align-items: center; padding-left: 8px; }
.pg-chev { width: 6px; height: 10px; margin-right: 6px; }
.strong { font-weight: 600; }
.l-plus { width: 16px; height: 16px; margin-left: auto; margin-right: 19px; }
.l-layers-title { height: 20px; line-height: 20px; margin: 14px 0 0 20px; }
.layers { list-style: none; margin: 14px 0 0; padding: 0; font-feature-settings: "zero" 1; }
.layers li { height: 40px; display: flex; align-items: center; padding-left: 24px; white-space: nowrap; }
.ly-ic { width: 14px; height: 14px; margin-left: -1px; margin-right: 13px; }
.dash-h { width: 12px; height: 1px; background: #b3b3b3; margin-right: 14px; flex: none; }
.dash-v { width: 1px; height: 12px; background: #b3b3b3; margin: 0 20px 0 5.500px; flex: none; }

/* canvas */
.canvas { flex: 1; background: #292c33; position: relative; overflow: hidden; }
.d-title {
  position: absolute; left: 233px; top: 88px; margin: 0; white-space: nowrap;
  font-size: 23.150px; line-height: 30px; font-weight: 700; color: #fff;
}
.node {
  position: absolute; display: flex; align-items: center; justify-content: center;
  text-align: center; font-size: 17px; line-height: 21px; white-space: nowrap; padding-top: 2px;
}
.box { background: #fff; color: #292c33; }
.pill-y { background: #fff587; color: #292c33; }
.ghost { border: 1.500px solid #e8e8e8; color: #fff; }
.n-launched { left: 468px; top: 162px; width: 113px; height: 40px; border-radius: 20px; }
.n-create { left: 468px; top: 243px; width: 123px; height: 36px; }
.n-start { left: 468px; top: 316px; width: 124px; height: 30px; }
.n-resume { left: 468px; top: 383px; width: 123px; height: 35px; }
.n-navl { left: 200px; top: 338px; width: 155px; height: 47px; }
.n-killed { left: 220px; top: 444px; width: 138px; height: 50px; border-radius: 25px; }
.n-running { left: 471px; top: 451px; width: 107px; height: 44px; border-radius: 22px; }
.n-pause { left: 468px; top: 536px; width: 113px; height: 37px; }
.n-higher { left: 200px; top: 552px; width: 194px; height: 44px; padding: 11px 0 0 19px; }
.n-destroy { left: 471px; top: 606px; width: 117px; height: 34px; }
.n-shut { left: 471px; top: 681px; width: 124px; height: 36px; border-radius: 18px; }
.n-restart { left: 902px; top: 316px; width: 148px; height: 33px; }
.n-navr { left: 670px; top: 449px; width: 156px; height: 48px; }
.n-returns { left: 901px; top: 595px; width: 155px; height: 46px; }
.wires { position: absolute; left: 0; top: 0; width: 1319px; height: 869px; pointer-events: none; }
.wire path { fill: none; stroke: #f2f2f2; stroke-width: 1.700; marker-end: url(#head); }
.floatbar {
  position: absolute; left: 396px; top: 794px; width: 526px; height: 60px;
  background: #fff; border-radius: 16px; display: flex; align-items: center; padding-left: 10px;
  box-shadow: 0 1px 4px rgba(0,0,0,.2);
}
.tool { width: 40px; height: 40px; display: flex; align-items: center; justify-content: center; flex: none; border-radius: 6px; }
.tool-on { background: #0d99ff; }
.tool-chev { width: 10px; height: 10px; margin: 0 4.500px 0 6px; color: #1e1e1e; }
.gap { width: 10.500px; flex: none; }
.bar-div { width: 1px; align-self: stretch; background: #e6e6e6; margin-left: 10.500px; }
.toggle { width: 50px; height: 30px; margin-left: 15px; background: #f5f5f5; border-radius: 8px; padding: 1px 0; display: block; }
.knob { width: 28px; height: 28px; background: #fff; border-radius: 7px; box-shadow: 0 1px 3px rgba(0,0,0,.25); display: flex; align-items: center; justify-content: center; }

/* right panel */
.right { width: 300px; flex: none; background: #fff; position: relative; }
.r-top { height: 60px; display: flex; align-items: center; padding-left: 15px; }
.avatar {
  width: 30px; height: 30px; border-radius: 50%; background: #f2447c; color: #fff;
  font-size: 15px; font-weight: 500; display: flex; align-items: center; justify-content: center;
}
.chev-dark { margin-left: 6px; color: #1e1e1e; }
.play { width: 16px; height: 18px; margin-left: 109px; }
.chev-play { margin-left: 17px; color: #1e1e1e; }
.share {
  width: 68px; height: 40px; margin-left: 10px; background: #0d99ff; color: #fff; border-radius: 6px;
  display: flex; align-items: center; justify-content: center; font-weight: 500;
}
.r-tabs { height: 41px; border-bottom: 1px solid #e6e6e6; padding: 0 0 11px 10px; display: flex; align-items: center; }
.zoomval { margin-left: 68px; }
.r-tabs .chev { margin-left: 16px; }
.r-page { height: 106px; border-bottom: 1px solid #e6e6e6; padding-left: 20px; }
.r-page-title { height: 50px; line-height: 50px; }
.r-fill { display: flex; align-items: center; margin-top: 5px; }
.fill-input {
  width: 231px; height: 30px; background: #f5f5f5; border-radius: 6px; display: flex; align-items: center; padding-left: 6px;
}
.swatch { width: 17px; height: 17px; background: #292c33; border-radius: 2px; flex: none; }
.hex { margin-left: 7px; width: 133px; border-right: 1px solid #e6e6e6; height: 30px; line-height: 30px; flex: none; }
.pct { margin-left: 11px; }
.pct-s { margin-left: 14px; color: #8a8a8a; }
.eye { width: 18px; height: 12px; margin-left: 16px; }
.r-row {
  height: 51px; border-bottom: 1px solid #e6e6e6; padding: 0 16px 1px 20px; display: flex; align-items: center;
  justify-content: space-between; color: #8a8a8a; font-weight: 500;
}
.r-ic { width: 16px; height: 18px; }
.plus-g { color: #777; height: 16px; }
.r-plugin { height: 40px; line-height: 40px; padding-left: 20px; }
.r-flow { height: 40px; margin-top: 10px; padding: 0 0 1px 21px; display: flex; align-items: center; font-weight: 500; }
.flow-ic { width: 17px; height: 15px; margin-right: 12px; }
.flow-minus { width: 16px; height: 2px; margin-left: auto; margin-right: 16px; }
.help {
  position: absolute; left: 230px; top: 799px; width: 40px; height: 40px; border-radius: 50%;
  background: #1e1e1e; color: #fff; font-size: 18px; display: flex; align-items: center; justify-content: center;
}

/* taskbar */
.taskbar {
  height: 60px; flex: none; background: #f8e4d5; border-top: 1px solid #d9cbc0; display: flex; align-items: center;
  font-size: 14px; color: #1c1c1c; position: relative; padding-bottom: 1.500px;
}
.weather { width: 315.500px; flex: none; display: flex; align-items: center; padding-left: 24px; position: relative; }
.w-ic { width: 32px; height: 30px; }
.w-badge {
  position: absolute; left: 38px; top: -12px; width: 21px; height: 21px; border-radius: 50%; background: #c42b1c; color: #fff;
  font-size: 13px; display: flex; align-items: center; justify-content: center;
}
.w-text { display: flex; flex-direction: column; margin-left: 8px; line-height: 20px; }
.w-sub { color: #5e5a56; }
.apps { display: flex; }
.app { width: 55px; height: 30px; display: flex; align-items: center; justify-content: center; position: relative; flex: none; }
.over { overflow: visible; }
.teams-t { font: 700 13px "Liberation Sans", sans-serif; fill: #fff; text-anchor: middle; }
.hp-t { font: italic 500 11px "Liberation Sans", sans-serif; fill: #fff; text-anchor: middle; }
.q-t { font: 700 20px "Liberation Sans", sans-serif; fill: #fff; text-anchor: middle; }
.my-t { font: 6.500px "Liberation Sans", sans-serif; fill: #fff; text-anchor: middle; }
.app-active::before {
  content: ""; position: absolute; left: 3.500px; top: -9px; width: 48px; height: 48px; border-radius: 5px; background: #fbeee4; box-shadow: 0 0 1px rgba(0,0,0,.15);
}
.chrome {
  width: 30px; height: 30px; border-radius: 50%; position: relative;
  background: conic-gradient(from 30deg, #ea4335 0 120deg, #34a853 120deg 240deg, #fbbc04 240deg 300deg, #ea4335 300deg);
  display: flex; align-items: center; justify-content: center;
}
.chrome-in { width: 14px; height: 14px; border-radius: 50%; background: #4285f4; box-shadow: 0 0 0 2.500px #fff; }
.chrome-k {
  position: absolute; left: 29px; top: -8px; width: 20px; height: 20px; border-radius: 50%; background: #7e57c2; color: #fff;
  font-size: 12px; display: flex; align-items: center; justify-content: center;
}
.active-bar { position: absolute; left: 17.500px; top: 37px; width: 20px; height: 4px; border-radius: 2px; background: #0f78d4; }
.r-app {
  width: 30px; height: 30px; border-radius: 50%; background: #7fb0dc; color: #fff; display: flex; align-items: center; justify-content: center;
  font: 20px "Liberation Serif", serif;
}
.zoom-app {
  width: 30px; height: 30px; border-radius: 10px; background: linear-gradient(180deg, #2d8cff, #0b5cff); color: #fff;
  font: 700 8px "Liberation Sans", sans-serif; display: flex; align-items: center; justify-content: center;
}
.tray { position: absolute; right: 0; top: 0; bottom: 1.500px; left: 1550px; display: flex; align-items: center; }
.tray-caret { width: 16px; height: 10px; margin-left: 5px; }
.tray-cloud { width: 22px; height: 12px; margin-left: 21px; }
.lang { display: flex; flex-direction: column; align-items: center; width: 34px; margin-left: 18px; line-height: 20px; }
.tray-wifi { width: 22px; height: 18px; margin-left: 20px; }
.tray-vol { width: 20px; height: 14px; margin-left: 9px; }
.tray-bat { width: 20px; height: 14px; margin-left: 10px; }
.clock { display: flex; flex-direction: column; align-items: flex-end; width: 90px; margin-left: 9px; line-height: 20px; font-size: 15px; }
.tray-bell { width: 18px; height: 20px; margin-left: 10px; }
```
